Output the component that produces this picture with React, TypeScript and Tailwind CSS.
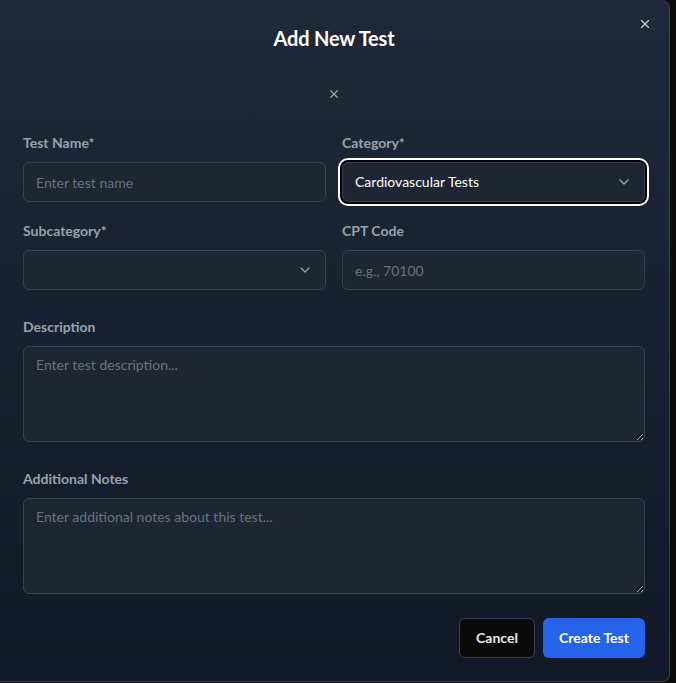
import React from "react";

function XIcon({ className }: { className?: string }) {
  return (
    <svg viewBox="0 0 24 24" fill="none" stroke="currentColor" strokeWidth={2} strokeLinecap="round" strokeLinejoin="round" className={className}>
      <path d="M18 6 6 18" />
      <path d="m6 6 12 12" />
    </svg>
  );
}

function Chevron() {
  return (
    <svg viewBox="0 0 24 24" fill="none" stroke="currentColor" strokeWidth={2} strokeLinecap="round" strokeLinejoin="round" className="w-4 h-4 text-gray-400">
      <path d="m6 9 6 6 6-6" />
    </svg>
  );
}

export default function App() {
  const font = { fontFamily: '"Lato", "Noto Sans", sans-serif' };
  return (
    <div className="w-[676px] h-[683px] bg-[#0b0b0c] flex" style={font}>
      <div className="w-[670px] h-[682px] rounded-r-lg border-b border-r border-gray-700 bg-gradient-to-b from-[#1f2937] to-[#111827] relative pl-[23px] pr-6 pt-6 flex flex-col">
        <button className="absolute right-[17px] top-[17px] text-gray-300">
          <XIcon className="w-[14px] h-[14px]" />
        </button>
        <h2 className="text-center text-white text-[20px] leading-7 font-bold tracking-[-0.2px]">Add New Test</h2>
        <div className="flex justify-center mt-[35px] text-gray-400">
          <XIcon className="w-[14px] h-[14px]" />
        </div>
        <div className="mt-[32px] grid grid-cols-2 gap-x-4 gap-y-[19px]">
          <div>
            <label className="block text-sm font-bold text-gray-400 mb-[9px]">Test Name*</label>
            <input placeholder="Enter test name" className="w-full h-10 px-3 rounded-md border border-gray-700 bg-[#1e2533] text-sm text-white placeholder:text-gray-500 outline-none" />
          </div>
          <div>
            <label className="block text-sm font-bold text-gray-400 mb-[9px]">Category*</label>
            <div className="h-10 rounded-md border border-gray-700 bg-[#1e2533] flex items-center justify-between px-3 ring-2 ring-white ring-offset-2 ring-offset-black">
              <span className="text-sm text-white">Cardiovascular Tests</span>
              <Chevron />
            </div>
          </div>
          <div>
            <label className="block text-sm font-bold text-gray-400 mb-[9px]">Subcategory*</label>
            <div className="h-10 rounded-md border border-gray-700 bg-[#1e2533] flex items-center justify-end px-3">
              <Chevron />
            </div>
          </div>
          <div>
            <label className="block text-sm font-bold text-gray-400 mb-[9px]">CPT Code</label>
            <input placeholder="e.g., 70100" className="w-full h-10 px-3 rounded-md border border-gray-700 bg-[#1e2533] text-sm text-white placeholder:text-gray-500 outline-none" />
          </div>
        </div>
        <div className="mt-[27px]">
          <label className="block text-sm font-bold text-gray-400 mb-[9px]">Description</label>
          <textarea placeholder="Enter test description..." className="block w-full h-24 px-3 py-2 rounded-md border border-gray-700 bg-[#1e2533] text-sm text-white placeholder:text-gray-500 outline-none" />
        </div>
        <div className="mt-[27px]">
          <label className="block text-sm font-bold text-gray-400 mb-[9px]">Additional Notes</label>
          <textarea placeholder="Enter additional notes about this test..." className="block w-full h-24 px-3 py-2 rounded-md border border-gray-700 bg-[#1e2533] text-sm text-white placeholder:text-gray-500 outline-none" />
        </div>
        <div className="mt-6 flex justify-end gap-2">
          <button className="h-10 w-[76px] rounded-md border border-gray-700 bg-[#0a0a0a] text-sm font-bold text-gray-200">Cancel</button>
          <button className="h-10 w-[102px] rounded-md bg-[#2563eb] text-sm font-bold text-white">Create Test</button>
        </div>
      </div>
    </div>
  );
}
